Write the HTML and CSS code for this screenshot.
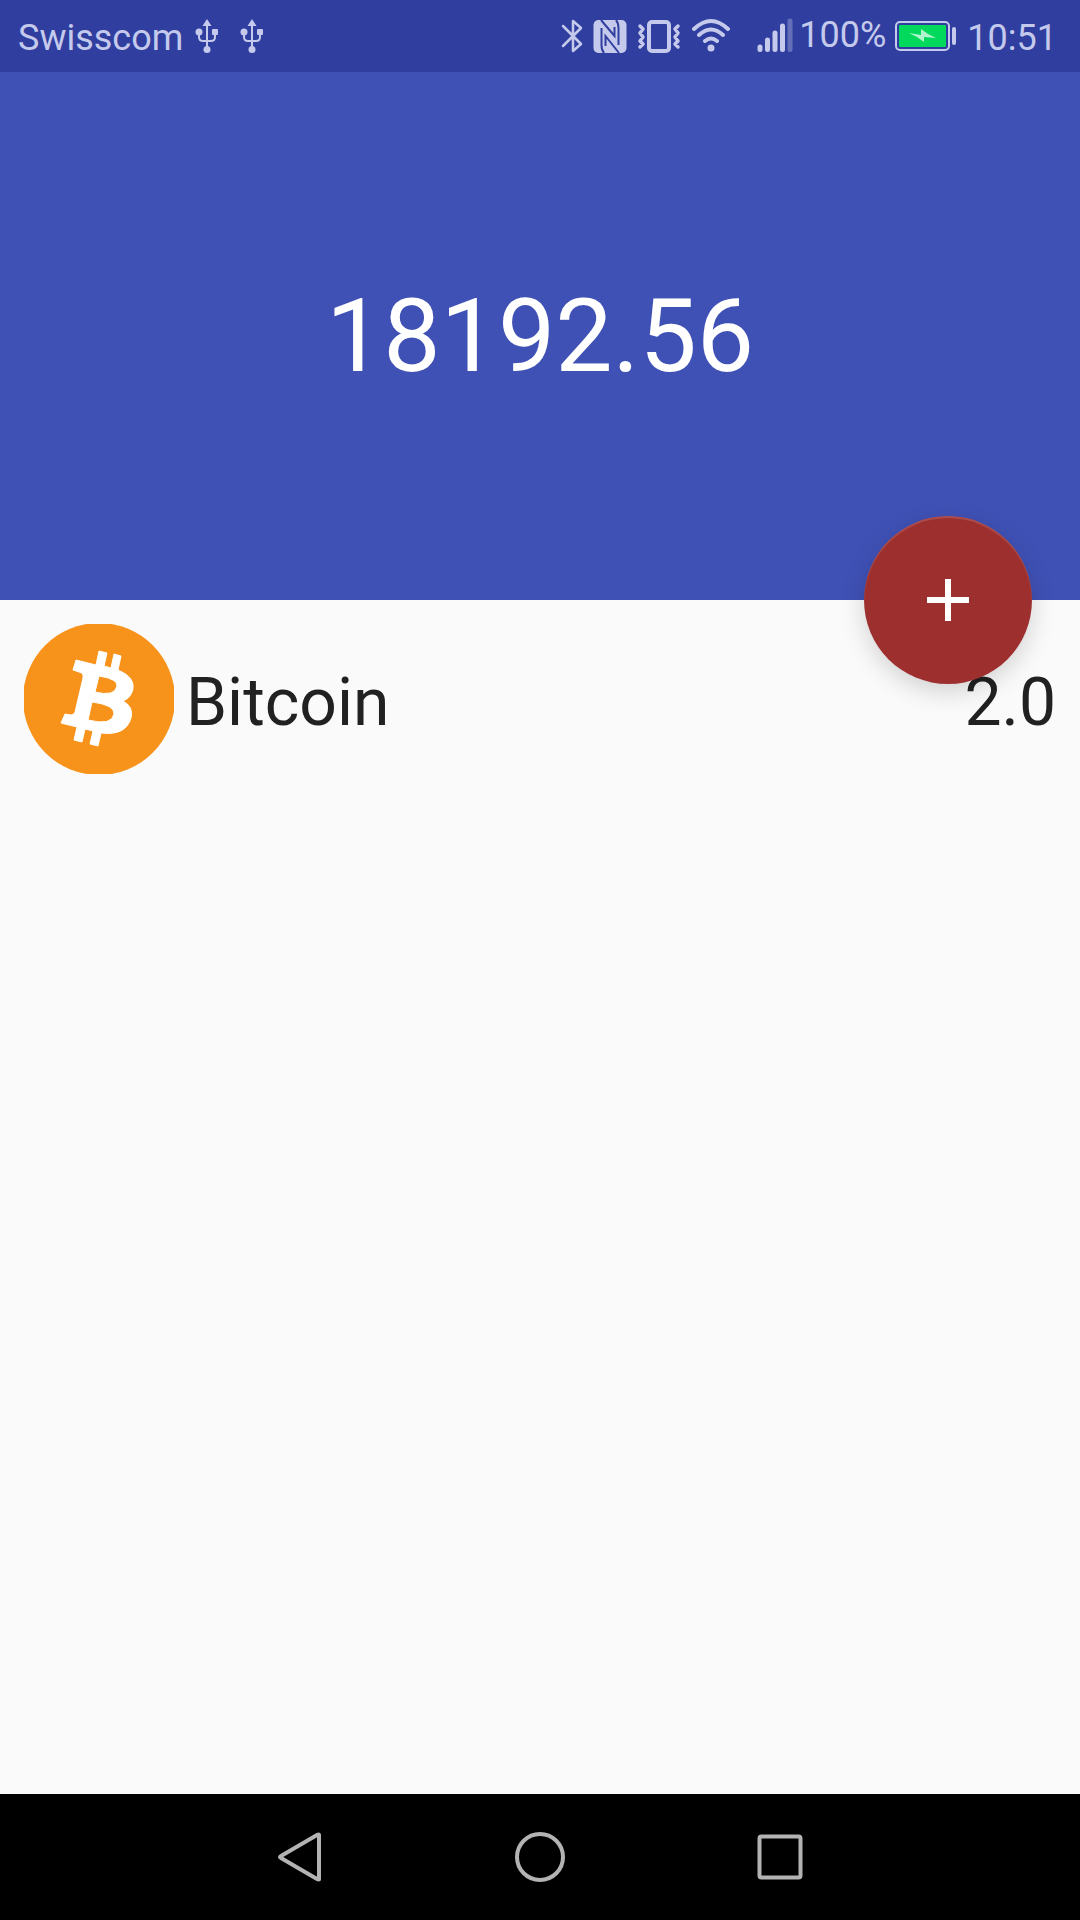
FILE: index.html
```html
<!DOCTYPE html>
<html lang="en">
<head>
<meta charset="utf-8">
<meta name="viewport" content="width=device-width, initial-scale=1">
<title>Portfolio</title>
<link rel="stylesheet" href="styles.css">
</head>
<body>
<div class="screen">
  <div class="status-bar">
    <div class="status-group">
      <span class="status-text">Swisscom</span>
      <div class="usb-icons">
        <svg class="icon" width="24" height="36" viewBox="0 0 24 36" role="img" aria-label="USB connected">
          <path d="M12 1L16.500 8H7.500Z" fill="currentColor"/>
          <path d="M12 7V31M4 15V19Q4 23 8 23H16Q20 23 20 19V15" fill="none" stroke="currentColor" stroke-width="2"/>
          <circle cx="4" cy="14" r="3.500" fill="currentColor"/><rect x="17" y="11" width="6" height="6" rx="1" fill="currentColor"/><circle cx="12" cy="31.500" r="3.500" fill="currentColor"/>
        </svg>
        <svg class="icon" width="24" height="36" viewBox="0 0 24 36" role="img" aria-label="USB debugging">
          <path d="M12 1L16.500 8H7.500Z" fill="currentColor"/>
          <path d="M12 7V31M4 15V19Q4 23 8 23H16Q20 23 20 19V15" fill="none" stroke="currentColor" stroke-width="2"/>
          <circle cx="4" cy="14" r="3.500" fill="currentColor"/><rect x="17" y="11" width="6" height="6" rx="1" fill="currentColor"/><circle cx="12" cy="31.500" r="3.500" fill="currentColor"/>
        </svg>
      </div>
    </div>
    <div class="status-group">
      <div class="radio-icons">
        <svg class="icon" width="22" height="36" viewBox="0 0 22 36" role="img" aria-label="Bluetooth">
          <path d="M2 8L20 26L12 33V3L20 10L2 28" fill="none" stroke="currentColor" stroke-width="2.500" stroke-linejoin="round" stroke-linecap="round"/>
        </svg>
        <svg class="icon nfc" width="34" height="36" viewBox="0 0 34 36" role="img" aria-label="NFC">
          <rect x="0.500" y="2" width="33" height="33" rx="5" fill="currentColor"/>
          <path class="nfc-line" d="M8 2L21.500 18V9M26 35L12.500 18V28M11 35Q8.500 32 8.500 27V10M23 2Q25.500 5 25.500 10V27"/>
        </svg>
        <svg class="icon" width="44" height="36" viewBox="0 0 44 36" role="img" aria-label="Vibrate">
          <rect x="12" y="4" width="20" height="29" rx="3" fill="none" stroke="currentColor" stroke-width="4"/>
          <path d="M3 8L6 11L3 15L6 19L3 23L6 26L3 29M41 8L38 11L41 15L38 19L41 23L38 26L41 29" fill="none" stroke="currentColor" stroke-width="3.500" stroke-linejoin="round" stroke-linecap="round"/>
        </svg>
        <svg class="icon" width="40" height="36" viewBox="0 0 40 36" role="img" aria-label="Wi-Fi">
          <path d="M3 11Q20 -5 37 11M8 17Q20 6 32 17M14 23Q20 18 26 23" fill="none" stroke="currentColor" stroke-width="4" stroke-linecap="round"/>
          <circle cx="20" cy="30" r="3.500" fill="currentColor"/>
        </svg>
      </div>
      <svg class="icon" width="36" height="36" viewBox="0 0 36 36" role="img" aria-label="Mobile signal">
        <path d="M3 29V31.500M10.500 22V31.500M18 15V31.500M25.500 8V31.500" stroke="currentColor" stroke-width="5" stroke-linecap="round"/>
        <path d="M33 3V31.500" stroke="currentColor" stroke-width="5" stroke-linecap="round" opacity="0.350"/>
      </svg>
      <span class="status-text battery-level">100%</span>
      <svg class="icon battery" width="62" height="30" viewBox="0 0 62 30" role="img" aria-label="Battery charging">
        <rect x="1" y="1" width="53" height="28" rx="4" fill="none" stroke="currentColor" stroke-width="2"/>
        <rect x="4" y="4" width="47" height="22" rx="1" fill="#00d95c"/>
        <path d="M14 12L26 14V8L33 13L41 17L29 16V21L22 16Z" fill="#b0f5cd"/>
        <rect x="57" y="6" width="4" height="18" rx="2" fill="currentColor"/>
      </svg>
      <time class="status-text">10:51</time>
    </div>
  </div>

  <header class="summary">
    <h1 class="total">18192.56</h1>
    <button class="add-button" type="button" aria-label="Add coin">
      <svg width="42" height="42" viewBox="0 0 42 42" aria-hidden="true"><path d="M21 0V42M0 21H42" stroke="#fff" stroke-width="6"/></svg>
    </button>
  </header>

  <main class="content">
    <ul class="coins">
      <li class="coin">
        <svg class="coin-logo" viewBox="0 0 150 150" aria-hidden="true">
          <circle cx="75" cy="75" r="76" fill="#f7931a"/>
          <path d="M52 36L72 41L75 27L83 29L80 42L87 44L90 30L97 32L94 46Q111 53 109 65Q107 74 99 77Q110 83 107 94Q102 112 77 109L74 122L66 120L69 107L61 105L58 118L50 116L53 103L37 99L41 90L47 91Q50 91 51 88L59 54Q60 49 55 48L49 46ZM75 52L71 68Q91 73 93 62Q94 55 75 52ZM68 78L64 96Q88 102 90 90Q91 81 68 78Z" fill="#fff" fill-rule="evenodd" stroke="#fff" stroke-width="1" stroke-linejoin="round"/>
        </svg>
        <span class="coin-name">Bitcoin</span>
        <span class="coin-amount">2.0</span>
      </li>
    </ul>
  </main>

  <nav class="nav-bar" aria-label="System">
    <button class="nav-button" type="button" aria-label="Back">
      <svg width="52" height="52" viewBox="0 0 52 52" aria-hidden="true"><path d="M45 4V48Q45 49 43 48L7 27Q5 26 7 25L43 4Q45 3 45 4Z"/></svg>
    </button>
    <button class="nav-button" type="button" aria-label="Home">
      <svg width="52" height="52" viewBox="0 0 52 52" aria-hidden="true"><circle cx="26" cy="26" r="23"/></svg>
    </button>
    <button class="nav-button" type="button" aria-label="Recent apps">
      <svg width="52" height="52" viewBox="0 0 52 52" aria-hidden="true"><rect x="5.500" y="5.500" width="41" height="41" rx="2"/></svg>
    </button>
  </nav>
</div>
</body>
</html>
```

FILE: styles.css
```css
* {
  box-sizing: border-box;
}

body {
  margin: 0;
  background: #fafafa;
  color: #212121;
  font-family: Roboto, "Noto Sans", sans-serif;
}

.screen {
  display: flex;
  flex-direction: column;
  min-height: 100vh;
}

.status-bar {
  display: flex;
  justify-content: space-between;
  height: 72px;
  padding: 0 23px 0 18px;
  background: #303f9f;
  color: #c5caec;
}

.status-group,
.usb-icons,
.radio-icons {
  display: flex;
  align-items: center;
}

.status-group {
  gap: 12px;
}

.usb-icons {
  gap: 21px;
}

.radio-icons {
  gap: 10px;
  margin-right: 14px;
}

.icon {
  display: block;
  flex: none;
}

.nfc-line {
  fill: none;
  stroke: #303f9f;
  stroke-width: 2;
}

.status-text {
  padding-top: 4px;
  font-size: 36px;
  line-height: 40px;
}

.battery-level {
  padding: 0;
  margin: 0 -3px 2px -6px;
}

.battery {
  margin-right: -2px;
}

.summary {
  position: relative;
  display: flex;
  align-items: center;
  justify-content: center;
  height: 528px;
  background: #3f51b5;
  color: #fff;
}

.total {
  margin: 0;
  font-size: 102px;
  font-weight: 400;
  line-height: 120px;
}

.add-button {
  position: absolute;
  right: 48px;
  bottom: -84px;
  display: grid;
  place-items: center;
  width: 168px;
  height: 168px;
  padding: 0;
  border: 0;
  border-radius: 50%;
  background: #9d302f;
  box-shadow: 0 8px 24px rgba(0, 0, 0, 0.16), inset 0 2px 1px rgba(255, 255, 255, 0.15);
}

.content {
  flex: 1;
}

.coins {
  margin: 0;
  padding: 0;
  list-style: none;
}

.coin {
  display: flex;
  align-items: center;
  gap: 12px;
  padding: 24px;
}

.coin-logo {
  display: block;
  width: 150px;
  height: 150px;
  overflow: hidden;
}

.coin-name,
.coin-amount {
  padding-top: 8px;
  font-size: 66px;
  line-height: 78px;
}

.coin-name {
  flex: 1;
}

.nav-bar {
  display: flex;
  justify-content: center;
  height: 126px;
  background: #000;
}

.nav-button {
  display: grid;
  place-items: center;
  width: 240px;
  padding: 0;
  border: 0;
  background: none;
}

.nav-button svg {
  fill: none;
  stroke: #b3b3b3;
  stroke-width: 4;
}
```
